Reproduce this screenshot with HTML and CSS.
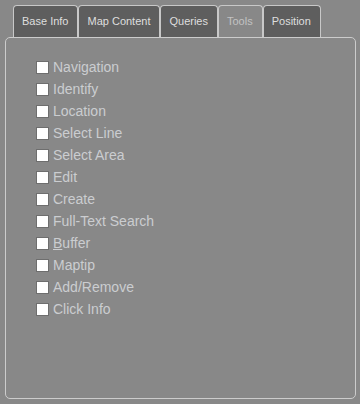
FILE: index.html
```html
<!DOCTYPE html>
<html lang="en">
<head>
    <meta charset="UTF-8">
    <meta name="viewport" content="width=device-width, initial-scale=1.0">
    <title>Tools</title>
    <link rel="stylesheet" href="styles.css">
</head>
<body>
    <div class="tabs">
        <div class="tab">Base Info</div>
        <div class="tab">Map Content</div>
        <div class="tab">Queries</div>
        <div class="tab active">Tools</div>
        <div class="tab">Position</div>
    </div>

    <div class="panel">
        <label class="tool"><input type="checkbox"><span>Navigation</span></label>
        <label class="tool"><input type="checkbox"><span>Identify</span></label>
        <label class="tool"><input type="checkbox"><span>Location</span></label>
        <label class="tool"><input type="checkbox"><span>Select Line</span></label>
        <label class="tool"><input type="checkbox"><span>Select Area</span></label>
        <label class="tool"><input type="checkbox"><span>Edit</span></label>
        <label class="tool"><input type="checkbox"><span>Create</span></label>
        <label class="tool"><input type="checkbox"><span>Full-Text Search</span></label>
        <label class="tool"><input type="checkbox"><span><u>B</u>uffer</span></label>
        <label class="tool"><input type="checkbox"><span>Maptip</span></label>
        <label class="tool"><input type="checkbox"><span>Add/Remove</span></label>
        <label class="tool"><input type="checkbox"><span>Click Info</span></label>
    </div>
</body>
</html>
```

FILE: styles.css
```css
body {
    font-family: "Liberation Sans", Arial, sans-serif;
    margin: 0;
    padding: 5px 4px 0 5px;
    background-color: #888888;
}

.tabs {
    display: flex;
    padding-left: 8px;
}

.tab {
    height: 31px;
    line-height: 31px;
    padding: 0 9px 0 8px;
    border: 1px solid #c8c8c8;
    border-bottom: none;
    border-radius: 4px 4px 0 0;
    background-color: #5e5e5e;
    color: #dedede;
    font-size: 11px;
}

.tab.active {
    background-color: #888888;
    color: #c2c2c2;
}

.panel {
    height: 342px;
    padding: 18px 0 0 30px;
    border: 1px solid #cccccc;
    border-radius: 5px;
}

.tool {
    display: flex;
    align-items: center;
    height: 22px;
    color: #cbcdd0;
    font-size: 14px;
}

.tool input {
    appearance: none;
    width: 13px;
    height: 13px;
    margin: 0 4px 0 0;
    border: 1px solid #6e6e6e;
    background-color: #ffffff;
}
```
